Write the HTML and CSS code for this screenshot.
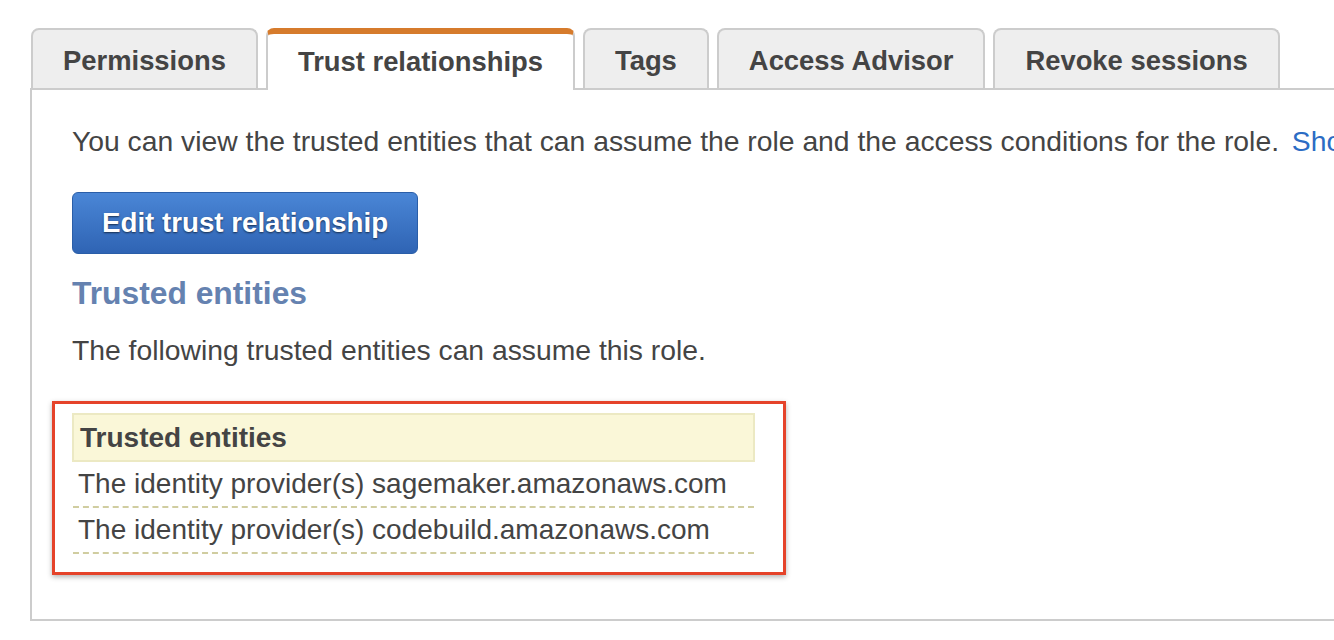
FILE: index.html
```html
<!DOCTYPE html>
<html>
<head>
<meta charset="utf-8">
<link rel="stylesheet" href="styles.css">
</head>
<body>
<div class="page">
  <div class="tabs">
    <div class="tab">Permissions</div>
    <div class="tab active">Trust relationships</div>
    <div class="tab">Tags</div>
    <div class="tab">Access Advisor</div>
    <div class="tab">Revoke sessions</div>
  </div>
  <div class="panel">
    <p class="intro">You can view the trusted entities that can assume the role and the access conditions for the role. <a class="link">Show</a></p>
    <button class="btn">Edit trust relationship</button>
    <h2 class="heading">Trusted entities</h2>
    <p class="sub">The following trusted entities can assume this role.</p>
    <div class="highlight">
      <table class="entities">
        <thead><tr><th>Trusted entities</th></tr></thead>
        <tbody>
          <tr><td>The identity provider(s) sagemaker.amazonaws.com</td></tr>
          <tr><td>The identity provider(s) codebuild.amazonaws.com</td></tr>
        </tbody>
      </table>
    </div>
  </div>
</div>
</body>
</html>
```

FILE: styles.css
```css
html, body {
  margin: 0;
  padding: 0;
  background: #fff;
  overflow: hidden;
}
body {
  font-family: "Liberation Sans", Arial, Helvetica, sans-serif;
  color: #444;
}
.page {
  padding: 28px 0 0 30px;
  width: 1304px;
}
.tabs {
  display: flex;
  gap: 8px;
  align-items: flex-end;
  padding-left: 1px;
  position: relative;
  z-index: 1;
}
.tab {
  box-sizing: border-box;
  height: 60px;
  padding: 3px 30px 0;
  border: 2px solid #ccc;
  border-bottom: none;
  border-radius: 8px 8px 0 0;
  background: #eee;
  font-size: 27.4px;
  font-weight: bold;
  color: #444;
  display: flex;
  align-items: center;
  white-space: nowrap;
}
.tab.active {
  background: #fff;
  border-top: 6px solid #d67b2c;
  height: 62px;
  margin-bottom: -2px;
  padding-top: 0;
}
.panel {
  border: 2px solid #ccc;
  border-right: none;
  height: 533px;
  box-sizing: border-box;
  padding: 31px 0 0 40px;
  overflow: hidden;
}
.intro {
  margin: 0;
  font-size: 28.3px;
  line-height: 40px;
  white-space: nowrap;
}
.link {
  color: #2c6cc4;
  margin-left: 5px;
}
.btn {
  margin-top: 31px;
  display: block;
  height: 62px;
  padding: 0 29px;
  border: 1px solid #2a5ea8;
  border-radius: 6px;
  background: linear-gradient(#4a86d6, #2f64b4);
  color: #fff;
  font-family: "Liberation Sans", Arial, sans-serif;
  font-size: 27.7px;
  font-weight: bold;
  text-shadow: 0 1px 2px rgba(0,0,0,0.6);
}
.heading {
  margin: 21px 0 0;
  font-size: 31.8px;
  line-height: 36px;
  color: #6582b0;
  font-weight: bold;
}
.sub {
  margin: 19px 0 0;
  font-size: 28.3px;
  line-height: 40px;
}
.highlight {
  width: fit-content;
  margin: 31px 0 0 -20px;
  border: 3px solid #e5432a;
  box-shadow: 0 2px 5px rgba(0,0,0,0.3);
  padding: 9px 28px 18px 17px;
}
.entities {
  width: 683px;
  border-collapse: collapse;
  font-size: 28px;
  color: #444;
}
.entities th {
  background: #faf7d8;
  border: 2px solid #ece9c3;
  text-align: left;
  height: 47px;
  box-sizing: border-box;
  padding: 0 6px;
  font-weight: bold;
}
.entities td {
  height: 44px;
  padding: 0 5px;
  border-bottom: 2px dashed #d0cda0;
}
```
